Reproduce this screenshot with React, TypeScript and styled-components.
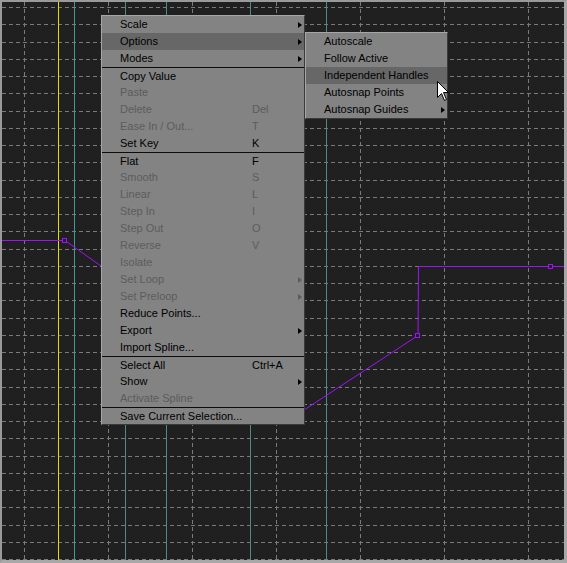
import React from "react";
import styled, { createGlobalStyle } from "styled-components";

const GlobalStyle = createGlobalStyle`
  html, body {
    margin: 0;
    padding: 0;
    background: #202020;
  }
`;

type Item = {
  label: string;
  shortcut?: string;
  sub?: boolean;
  off?: boolean;
  hot?: boolean;
  sep?: boolean;
};

const mainItems: Item[] = [
  { label: "Scale", sub: true },
  { label: "Options", sub: true, hot: true },
  { label: "Modes", sub: true },
  { label: "Copy Value", sep: true },
  { label: "Paste", off: true },
  { label: "Delete", shortcut: "Del", off: true },
  { label: "Ease In / Out...", shortcut: "T", off: true },
  { label: "Set Key", shortcut: "K" },
  { label: "Flat", shortcut: "F", sep: true },
  { label: "Smooth", shortcut: "S", off: true },
  { label: "Linear", shortcut: "L", off: true },
  { label: "Step In", shortcut: "I", off: true },
  { label: "Step Out", shortcut: "O", off: true },
  { label: "Reverse", shortcut: "V", off: true },
  { label: "Isolate", off: true },
  { label: "Set Loop", sub: true, off: true },
  { label: "Set Preloop", sub: true, off: true },
  { label: "Reduce Points..." },
  { label: "Export", sub: true },
  { label: "Import Spline..." },
  { label: "Select All", shortcut: "Ctrl+A", sep: true },
  { label: "Show", sub: true },
  { label: "Activate Spline", off: true },
  { label: "Save Current Selection...", sep: true },
];

const optionItems: Item[] = [
  { label: "Autoscale" },
  { label: "Follow Active" },
  { label: "Independent Handles", hot: true },
  { label: "Autosnap Points" },
  { label: "Autosnap Guides", sub: true },
];

const Viewport = styled.div`
  position: relative;
  width: 562px;
  height: 558px;
  background: #202020;
  border-style: solid;
  border-width: 2px 3px 3px 2px;
  border-color: #9a9a9a #a8a8a8 #a8a8a8 #9a9a9a;
  overflow: hidden;
  font-family: "Liberation Sans", Arial, sans-serif;
  font-size: 11px;
`;

const Graph = styled.svg`
  display: block;
  width: 562px;
  height: 558px;
`;

const Menu = styled.div<{ $left: number; $top: number; $width: number }>`
  position: absolute;
  left: ${(p) => p.$left}px;
  top: ${(p) => p.$top}px;
  width: ${(p) => p.$width}px;
  box-sizing: border-box;
  display: flex;
  flex-direction: column;
  background: #838383;
  border-style: solid;
  border-width: 1px;
  border-color: #a6a6a6 #3a3a3a #3a3a3a #a6a6a6;
`;

const Row = styled.div<{ $off?: boolean; $hot?: boolean; $sep?: boolean; $label: number }>`
  display: grid;
  grid-template-columns: ${(p) => p.$label}px 1fr 10px;
  align-items: center;
  height: 17px;
  box-sizing: border-box;
  padding-left: 18px;
  line-height: 17px;
  white-space: nowrap;
  color: ${(p) => (p.$off ? "#5c5c5c" : "#000")};
  background: ${(p) => (p.$hot ? "#676767" : "transparent")};
  border-top: ${(p) => (p.$sep ? "1px solid #0c0c0c" : "none")};
`;

const Label = styled.span`
  overflow: visible;
`;

const Shortcut = styled.span``;

const Arrow = styled.span<{ $off?: boolean }>`
  width: 0;
  height: 0;
  margin-left: 4px;
  border-top: 3px solid transparent;
  border-bottom: 3px solid transparent;
  border-left: 4px solid ${(p) => (p.$off ? "#5c5c5c" : "#000")};
`;

const Pointer = styled.svg`
  position: absolute;
  left: 435px;
  top: 79px;
  width: 12px;
  height: 20px;
`;

function MenuList({ items, label }: { items: Item[]; label: number }) {
  return (
    <>
      {items.map((it) => (
        <Row key={it.label} $off={it.off} $hot={it.hot} $sep={it.sep} $label={label}>
          <Label>{it.label}</Label>
          <Shortcut>{it.shortcut}</Shortcut>
          {it.sub ? <Arrow $off={it.off} /> : <span />}
        </Row>
      ))}
    </>
  );
}

const rows = Array.from({ length: 33 }, (_, k) => Math.round(7 + 17.25 * k) + 0.5);
const cols = Array.from({ length: 7 }, (_, k) => 24 + 84 * k + 0.5);
const guides = [
  { x: 74.5, c: "#3f9a90" },
  { x: 125.5, c: "#5a8683" },
  { x: 166.5, c: "#4f8a86" },
  { x: 250.5, c: "#4f8a86" },
  { x: 326.5, c: "#4f8a86" },
];
const keys = [
  [65, 240],
  [418, 335],
  [551, 266],
];

export default function App() {
  return (
    <>
      <GlobalStyle />
      <Viewport>
        <Graph viewBox="2 2 562 558" shapeRendering="crispEdges">
          {rows.map((y) => (
            <line key={"h" + y} x1={2} x2={564} y1={y} y2={y} stroke="#7a7a7a" strokeDasharray="4 3" />
          ))}
          {cols.map((x) => (
            <line key={"v" + x} x1={x} x2={x} y1={2} y2={560} stroke="#7a7a7a" strokeDasharray="4 3" />
          ))}
          <line x1={58.5} x2={58.5} y1={2} y2={560} stroke="#e0e000" />
          {guides.map((g) => (
            <line key={g.x} x1={g.x} x2={g.x} y1={2} y2={560} stroke={g.c} />
          ))}
          <polyline
            points="2,240.5 65,240.5 200,336 304,410 418,335.5 418.5,266.5 564,266.5"
            fill="none"
            stroke="#a010ff"
            shapeRendering="auto"
          />
          {keys.map(([x, y]) => (
            <rect key={x} x={x - 2.5} y={y - 2} width={4} height={4} fill="#202020" stroke="#a010ff" />
          ))}
        </Graph>

        <Menu $left={99} $top={13} $width={204}>
          <MenuList items={mainItems} label={132} />
        </Menu>
        <Menu $left={303} $top={30} $width={143}>
          <MenuList items={optionItems} label={104} />
        </Menu>

        <Pointer viewBox="0 0 12 20">
          <path d="M0.5 0.5 L0.5 16.5 L4.5 12.5 L7.5 19.5 L9.5 18.5 L6.5 11.5 L11.5 11.5 Z" fill="#fff" stroke="#000" />
        </Pointer>
      </Viewport>
    </>
  );
}
